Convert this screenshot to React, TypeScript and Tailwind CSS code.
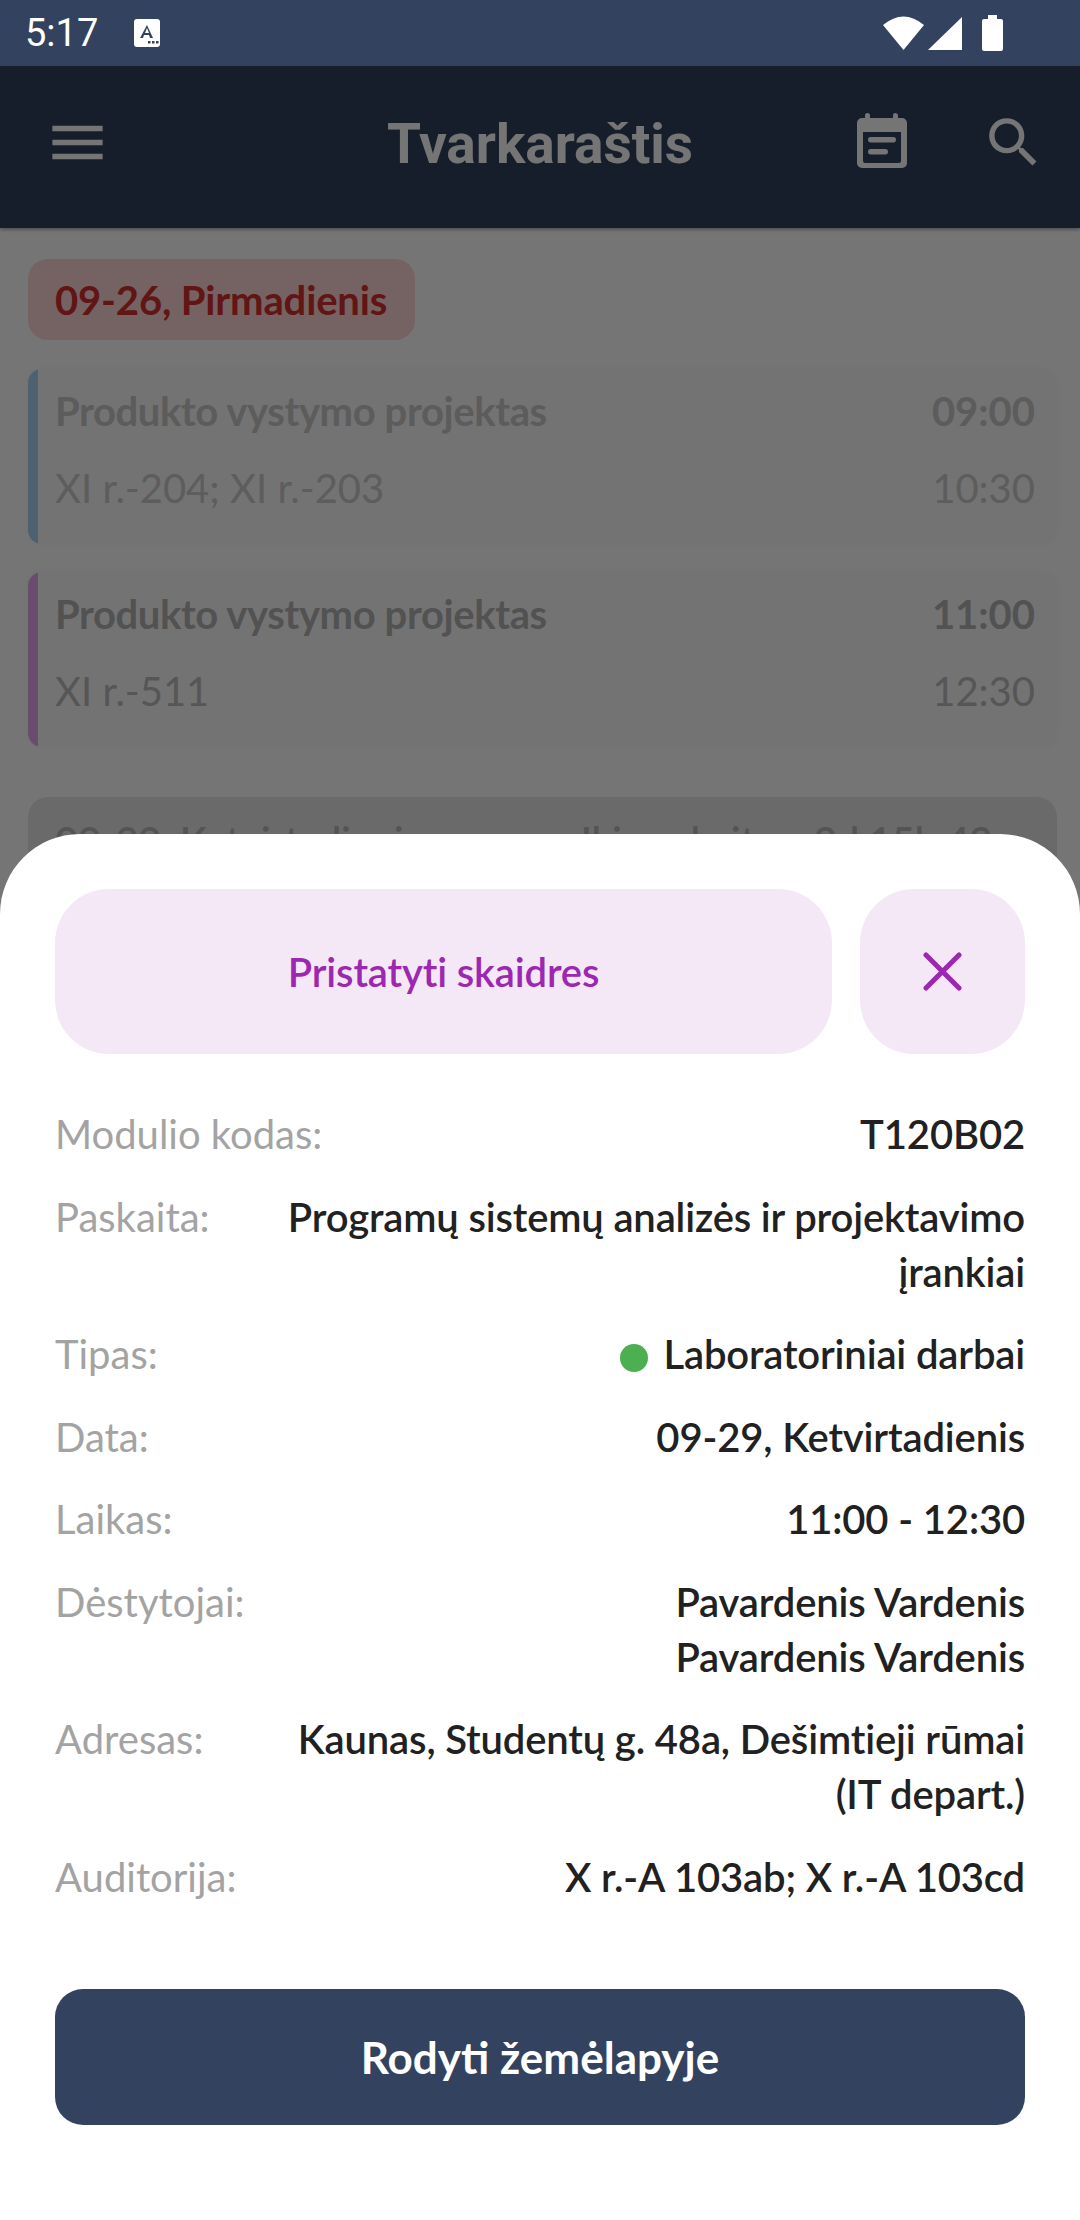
import { MdMenu, MdSearch } from 'react-icons/md'

const FONT = "font-['Lato','Noto_Sans',sans-serif]"

interface InfoRow {
  label: string
  lines: string[]
  dot?: boolean
}

const ROWS: InfoRow[] = [
  { label: 'Modulio kodas:', lines: ['T120B02'] },
  { label: 'Paskaita:', lines: ['Programų sistemų analizės ir projektavimo įrankiai'] },
  { label: 'Tipas:', lines: ['Laboratoriniai darbai'], dot: true },
  { label: 'Data:', lines: ['09-29, Ketvirtadienis'] },
  { label: 'Laikas:', lines: ['11:00 - 12:30'] },
  { label: 'Dėstytojai:', lines: ['Pavardenis Vardenis', 'Pavardenis Vardenis'] },
  { label: 'Adresas:', lines: ['Kaunas, Studentų g. 48a, Dešimtieji rūmai (IT depart.)'] },
  { label: 'Auditorija:', lines: ['X r.-A 103ab; X r.-A 103cd'] },
]

function StatusBar() {
  return (
    <div className="relative z-20 flex h-[66px] items-center justify-between bg-[#32425f] pl-[25px] pr-[77px] text-white">
      <div className="flex items-center gap-[36px]">
        <span className="font-['Roboto',sans-serif] text-[38px] leading-none">5:17</span>
        <svg width="26" height="28" viewBox="0 0 26 28">
          <rect width="26" height="28" rx="3" fill="#fff" />
          <path d="M13 6l6 13h-3l-1-3h-5l-1 3H6z M11 14h4l-2-5z" fill="#32425f" fillRule="evenodd" />
          <rect x="14" y="22" width="2.5" height="2.5" fill="#32425f" />
          <rect x="18" y="22" width="2.5" height="2.5" fill="#32425f" />
          <rect x="22" y="22" width="2.5" height="2.5" fill="#32425f" />
        </svg>
      </div>
      <div className="flex items-center">
        <svg width="41" height="34" viewBox="0 0 41 34" className="mr-[4px]">
          <path d="M0 9Q20.5 -8 41 9L20.5 34z" fill="#fff" />
        </svg>
        <svg width="34" height="33" viewBox="0 0 34 33" className="mr-[20px]">
          <path d="M34 0V33H0z" fill="#fff" />
        </svg>
        <svg width="21" height="36" viewBox="0 0 21 36">
          <path d="M6 0h9v4h4a2 2 0 0 1 2 2v28a2 2 0 0 1-2 2H2a2 2 0 0 1-2-2V6a2 2 0 0 1 2-2h4z" fill="#fff" />
        </svg>
      </div>
    </div>
  )
}

function Header() {
  return (
    <div className="relative flex h-[162px] items-center justify-center bg-[#32425f] pb-[5px] text-white shadow-[0_2px_3px_rgba(0,0,0,0.3)]">
      <MdMenu className="absolute left-[44px] top-[43px]" size={67} />
      <span className="font-['Roboto',sans-serif] text-[55px] font-bold">Tvarkaraštis</span>
      <svg width="50" height="55" viewBox="0 0 50 55" className="absolute left-[857px] top-[47px]">
        <path d="M10.5 0A2.5 2.5 0 0 1 13 2.500V5h23V2.500a2.500 2.500 0 0 1 5 0V5h4a5 5 0 0 1 5 5v40a5 5 0 0 1-5 5H5a5 5 0 0 1-5-5V10a5 5 0 0 1 5-5h3V2.500A2.500 2.500 0 0 1 10.500 0zM6 19v29a2 2 0 0 0 2 2h34a2 2 0 0 0 2-2V19z" fill="#fff" fillRule="evenodd" />
        <rect x="11" y="24" width="28" height="5.500" rx="2.750" fill="#fff" />
        <rect x="11" y="36" width="20" height="5.500" rx="2.750" fill="#fff" />
      </svg>
      <MdSearch className="absolute left-[981px] top-[44px]" size={65} />
    </div>
  )
}

function LessonCard({ bar, titleColor, roomColor, title, room, from, to }: { bar: string; titleColor: string; roomColor: string; title: string; room: string; from: string; to: string }) {
  return (
    <div className="flex h-[175px] overflow-hidden rounded-[14px] bg-[#fbfbfb] shadow-[0_0_10px_rgba(0,0,0,0.03)]">
      <div className={`w-[10px] shrink-0 ${bar}`} />
      <div className={`flex flex-1 flex-col gap-[22px] pl-[17px] pr-[22px] pt-[15px] text-[40px] leading-[55px] ${roomColor}`}>
        <div className={`flex justify-between font-bold ${titleColor}`}>
          <span className="tracking-[-0.4px]">{title}</span>
          <span>{from}</span>
        </div>
        <div className="flex justify-between">
          <span>{room}</span>
          <span>{to}</span>
        </div>
      </div>
    </div>
  )
}

function Schedule() {
  return (
    <div className="flex flex-col pl-[28px] pr-[23px] pt-[31px]">
      <div className="mb-[29px] flex h-[81px] w-[387px] items-center rounded-[20px] bg-[#ffd6d6] pl-[27px] text-[40px] font-bold tracking-[-0.15px] text-[#d32f2f]">
        09-26, Pirmadienis
      </div>
      <LessonCard bar="bg-[#a9d4f5]" titleColor="text-[#c8c8c8]" roomColor="text-[#cacaca]" title="Produkto vystymo projektas" room="XI r.-204; XI r.-203" from="09:00" to="10:30" />
      <div className="h-[28px]" />
      <LessonCard bar="bg-[#e8a5f0]" titleColor="text-[#b4b4b4]" roomColor="text-[#bcbcbc]" title="Produkto vystymo projektas" room="XI r.-511" from="11:00" to="12:30" />
      <div className="mt-[50px] flex h-[90px] justify-between rounded-[20px] bg-[#e8e8e8] pl-[27px] pr-[32px] pt-[17px] text-[40px] font-semibold leading-[55px] tracking-[-0.3px] text-[#b8b8b8]">
        <span>09-29, Ketvirtadienis</span>
        <span>Iki paskaitos: 2d 15h 42m</span>
      </div>
    </div>
  )
}

function Sheet() {
  return (
    <div className="absolute inset-x-0 bottom-0 z-10 h-[1386px] rounded-t-[80px] bg-white px-[55px] pt-[55px]">
      <div className="flex gap-[28px]">
        <div className="flex h-[165px] flex-1 items-center justify-center rounded-[54px] bg-[#f4e8f6] text-[40px] font-semibold tracking-[-0.15px] text-[#9c27b0]">
          Pristatyti skaidres
        </div>
        <div className="flex h-[165px] w-[165px] items-center justify-center rounded-[54px] bg-[#f4e8f6]">
          <svg width="39" height="39" viewBox="0 0 39 39" fill="none" stroke="#9c27b0" strokeWidth="5" strokeLinecap="round">
            <path d="M3 3L36 36M36 3L3 36" />
          </svg>
        </div>
      </div>
      <div className="mt-[53px] flex flex-col gap-[27.5px] text-[40px] leading-[55px]">
        {ROWS.map(row => (
          <div key={row.label} className="flex justify-between">
            <span className="shrink-0 font-normal text-[#a3a3a3]">{row.label}</span>
            <div className="w-[745px] text-right font-semibold tracking-[-0.15px] text-[#212121]">
              {row.dot && <span className="mr-[15px] inline-block h-[28px] w-[28px] rounded-full bg-[#4caf50] align-[-3px]" />}
              {row.lines.map(line => (
                <div key={line + row.label} className={row.dot ? 'inline' : ''}>{line}</div>
              ))}
            </div>
          </div>
        ))}
      </div>
      <div className="mt-[84px] flex h-[136px] items-center justify-center rounded-[28px] bg-[#32425f] text-[44px] font-bold text-white">
        Rodyti žemėlapyje
      </div>
    </div>
  )
}

export default function App() {
  return (
    <div className={`relative h-[2220px] w-[1080px] overflow-hidden bg-white ${FONT}`}>
      <StatusBar />
      <Header />
      <Schedule />
      <div className="absolute inset-0 z-[5] bg-black/54" />
      <Sheet />
    </div>
  )
}
